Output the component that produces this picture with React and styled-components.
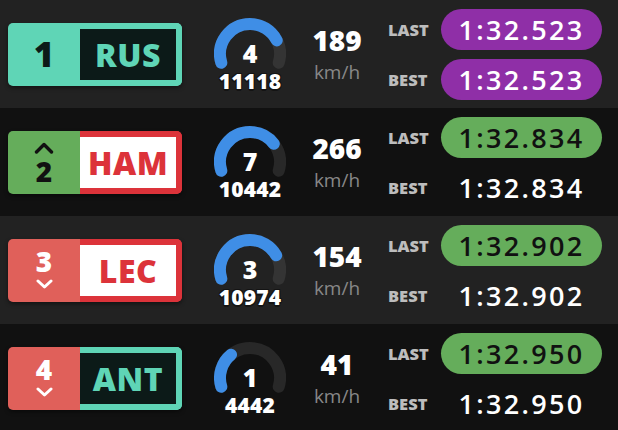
import styled, { createGlobalStyle } from "styled-components";

const GlobalStyle = createGlobalStyle`
  html, body {
    margin: 0;
    padding: 0;
    background: #111;
  }
  body {
    font-family: "Open Sans", "DejaVu Sans", sans-serif;
  }
`;

const MAX_RPM = 14000;

const TEAL = "#5fd5b6";
const TEAL_DARK = "#0c1a18";
const RED = "#dc333a";
const SALMON = "#e0605a";
const GREEN = "#65ad5b";
const PURPLE = "#8f2fa7";

const drivers = [
  {
    pos: 1, code: "RUS", gear: 4, rpm: 11118, speed: 189,
    posBg: TEAL, posColor: TEAL_DARK, change: null,
    border: TEAL, inner: TEAL_DARK, codeColor: TEAL,
    last: "1:32.523", best: "1:32.523", lastBg: PURPLE, bestBg: PURPLE,
    lastColor: "#fff",
  },
  {
    pos: 2, code: "HAM", gear: 7, rpm: 10442, speed: 266,
    posBg: GREEN, posColor: "#111", change: "up",
    border: RED, inner: "#fff", codeColor: RED,
    last: "1:32.834", best: "1:32.834", lastBg: GREEN, bestBg: "transparent",
    lastColor: "#111",
  },
  {
    pos: 3, code: "LEC", gear: 3, rpm: 10974, speed: 154,
    posBg: SALMON, posColor: "#fff", change: "down",
    border: RED, inner: "#fff", codeColor: RED,
    last: "1:32.902", best: "1:32.902", lastBg: GREEN, bestBg: "transparent",
    lastColor: "#111",
  },
  {
    pos: 4, code: "ANT", gear: 1, rpm: 4442, speed: 41,
    posBg: SALMON, posColor: "#fff", change: "down",
    border: TEAL, inner: TEAL_DARK, codeColor: TEAL,
    last: "1:32.950", best: "1:32.950", lastBg: GREEN, bestBg: "transparent",
    lastColor: "#111",
  },
];

const Chevron = ({ dir, color }) =>
  dir === "up" ? (
    <svg width="20" height="12" viewBox="0 0 20 12" fill="none" stroke={color}
      strokeWidth="3.4" strokeLinecap="round" strokeLinejoin="round">
      <path d="M2.5 10 L10 2.5 L17.5 10" />
    </svg>
  ) : (
    <svg width="17" height="10" viewBox="0 0 17 10" fill="none" stroke={color}
      strokeWidth="3" strokeLinecap="round" strokeLinejoin="round">
      <path d="M2 2 L8.5 8 L15 2" />
    </svg>
  );

// arc from 197deg round the top to -17deg
const ARC = "M7.31 44.77 A30 30 0 1 1 64.69 44.77";

const RpmGauge = ({ gear, rpm, alt }) => {
  const pct = Math.min(100, (rpm / MAX_RPM) * 100);
  return (
    <Gauge>
      <svg width="72" height="72" viewBox="0 0 72 72">
        <path d={ARC} fill="none" stroke={alt ? "#282828" : "#343434"} strokeWidth="12" strokeLinecap="round" />
        <path
          d={ARC}
          fill="none"
          stroke="#3f8ee6"
          strokeWidth="12"
          strokeLinecap="round"
          pathLength="100"
          strokeDasharray={`${pct} 200`}
        />
      </svg>
      <Gear>{gear}</Gear>
      <Rpm>{rpm}</Rpm>
    </Gauge>
  );
};

const App = () => {
  return (
    <>
      <GlobalStyle />
      <Board>
        {drivers.map((d, i) => (
          <Row key={d.code} $alt={i % 2 === 1}>
            <Badge>
              <Pos $bg={d.posBg} $color={d.posColor} $big={!d.change}>
                {d.change === "up" && <Chevron dir="up" color={d.posColor} />}
                <span>{d.pos}</span>
                {d.change === "down" && <Chevron dir="down" color={d.posColor} />}
              </Pos>
              <Code $border={d.border} $bg={d.inner} $color={d.codeColor}>
                {d.code}
              </Code>
            </Badge>
            <RpmGauge gear={d.gear} rpm={d.rpm} alt={i % 2 === 1} />
            <Speed>
              <strong>{d.speed}</strong>
              <span>km/h</span>
            </Speed>
            <Times>
              <Label>LAST</Label>
              <Lap $bg={d.lastBg} $color={d.lastColor}>{d.last}</Lap>
              <Label>BEST</Label>
              <Lap $bg={d.bestBg} $color="#fff">{d.best}</Lap>
            </Times>
          </Row>
        ))}
      </Board>
    </>
  );
};

const Board = styled.main`
  width: 618px;
  height: 430px;
  overflow: hidden;
  display: flex;
  flex-direction: column;
`;

const Row = styled.section`
  flex: 0 0 108px;
  display: flex;
  align-items: center;
  padding-left: 8px;
  background: ${(p) => (p.$alt ? "#111111" : "#222222")};
`;

const Badge = styled.div`
  display: flex;
  width: 174px;
  height: 63px;
  border-radius: 5px;
  overflow: hidden;
  box-shadow: 0 2px 4px rgba(0, 0, 0, 0.45);
`;

const Pos = styled.div`
  width: 72px;
  display: flex;
  flex-direction: column;
  align-items: center;
  justify-content: center;
  gap: 7px;
  background: ${(p) => p.$bg};
  color: ${(p) => p.$color};
  font-weight: 800;
  font-size: ${(p) => (p.$big ? "35px" : "28px")};
  line-height: 1;

  & span {
    display: block;
    line-height: 0.74;
  }
  & svg {
    display: block;
  }
`;

const Code = styled.div`
  flex: 1;
  display: flex;
  align-items: center;
  justify-content: center;
  border: 6px solid ${(p) => p.$border};
  border-left: 0;
  border-radius: 0 5px 5px 0;
  background: ${(p) => p.$bg};
  color: ${(p) => p.$color};
  font-weight: 800;
  font-size: 32px;
  letter-spacing: 0.5px;
`;

const Gauge = styled.div`
  margin-left: 32px;
  width: 72px;
  height: 72px;
  display: grid;
  place-items: center;

  & > * {
    grid-area: 1 / 1;
  }
  & svg {
    display: block;
  }
`;

const Gear = styled.div`
  align-self: start;
  margin-top: 23px;
  color: #fff;
  font-weight: 800;
  font-size: 25px;
  line-height: 24px;
`;

const Rpm = styled.div`
  align-self: end;
  margin-bottom: -1px;
  color: #fff;
  font-weight: 800;
  font-size: 21px;
  line-height: 20px;
  letter-spacing: 0.2px;
  text-shadow: 1px 1px 0 #141414, -1px -1px 0 #141414, 1px -1px 0 #141414,
    -1px 1px 0 #141414, 0 2px 0 #141414;
`;

const Speed = styled.div`
  width: 62px;
  margin-left: 20px;
  display: flex;
  flex-direction: column;
  align-items: center;
  gap: 9px;

  & strong {
    color: #fff;
    font-weight: 800;
    font-size: 28px;
    line-height: 1;
  }
  & span {
    color: #888;
    font-size: 19px;
    line-height: 1;
  }
`;

const Times = styled.div`
  margin-left: 20px;
  display: grid;
  grid-template-columns: 53px 161px;
  row-gap: 9px;
  align-items: center;
`;

const Label = styled.div`
  color: #bdbdbd;
  font-weight: 800;
  font-size: 16.5px;
`;

const Lap = styled.div`
  height: 41px;
  border-radius: 21px;
  display: flex;
  align-items: center;
  justify-content: center;
  background: ${(p) => p.$bg};
  color: ${(p) => p.$color};
  font-weight: 600;
  font-size: 27px;
  letter-spacing: 2.3px;
`;

export default App;
